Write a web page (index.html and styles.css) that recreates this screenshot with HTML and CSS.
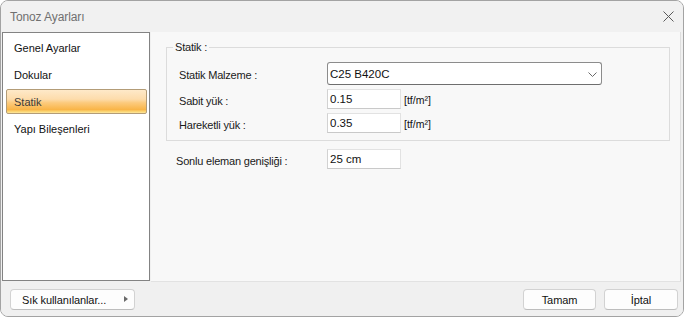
FILE: index.html
```html
<!DOCTYPE html>
<html lang="tr">
<head>
<meta charset="utf-8">
<title>Tonoz Ayarları</title>
<link rel="stylesheet" href="styles.css">
</head>
<body>
<div class="window">
  <div class="titlebar">
    <span class="title">Tonoz Ayarları</span>
    <svg class="close" width="11" height="11" viewBox="0 0 11 11"><path d="M0.5 0.5 L10.5 10.5 M10.5 0.5 L0.5 10.5" stroke="#5a5a5a" stroke-width="1" fill="none"/></svg>
  </div>
  <div class="main">
    <div class="list">
      <div class="item">Genel Ayarlar</div>
      <div class="item">Dokular</div>
      <div class="item selected">Statik</div>
      <div class="item">Yapı Bileşenleri</div>
    </div>
    <div class="panel">
      <fieldset class="group">
        <legend class="legend">Statik :</legend>
        <div class="grid">
          <span class="label">Statik Malzeme :</span>
          <div class="combo">
            <span>C25 B420C</span>
            <svg width="9" height="5" viewBox="0 0 9 5"><path d="M0.5 0.5 L4.5 4.5 L8.5 0.5" stroke="#6a6a6a" stroke-width="1" fill="none"/></svg>
          </div>
          <span class="label">Sabit yük :</span>
          <div class="field"><span class="input">0.15</span><span class="unit">[tf/m²]</span></div>
          <span class="label">Hareketli yük :</span>
          <div class="field"><span class="input">0.35</span><span class="unit">[tf/m²]</span></div>
        </div>
      </fieldset>
      <div class="row">
        <span class="label wide">Sonlu eleman genişliği :</span>
        <span class="input">25 cm</span>
      </div>
    </div>
  </div>
  <div class="footer">
    <button class="btn fav">Sık kullanılanlar...<span class="arrow"></span></button>
    <div class="actions">
      <button class="btn ok">Tamam</button>
      <button class="btn cancel">İptal</button>
    </div>
  </div>
</div>
</body>
</html>
```

FILE: styles.css
```css
* { box-sizing: border-box; }
html, body { margin: 0; padding: 0; background: #ffffff; }
body { font-family: "Liberation Sans", Arial, sans-serif; font-size: 11px; color: #1a1a1a; }

.window {
  width: 684px; height: 317px;
  border: 1px solid #a3a3a3;
  border-radius: 8px;
  overflow: hidden;
  background: #f0f0f0;
  display: flex; flex-direction: column;
}

.titlebar {
  height: 31px; flex: none;
  display: flex; align-items: center; justify-content: space-between;
  padding: 0 9px 0 9px;
  background: #f1f1f1;
}
.title { font-size: 12px; color: #707070; letter-spacing: -0.1px; }
.close { display: block; margin-top: 0; }

.main {
  height: 250px; flex: none;
  display: flex;
  padding-left: 1px;
  gap: 1px;
}

.list {
  width: 148px; height: 249px;
  border: 1px solid #838383;
  background: #ffffff;
  padding: 2px 2px 0 3px;
  display: flex; flex-direction: column; gap: 2px;
}
.item {
  height: 25px;
  display: flex; align-items: center;
  padding-left: 7px;
  font-size: 11px; color: #111;
  border: 1px solid transparent;
  border-radius: 2px;
}
.item.selected {
  border-color: #b39c77;
  color: #3b3b3b;
  background: linear-gradient(#fee9c9 0%, #fddcab 40%, #fccb7e 55%, #f9b548 85%, #fbd36f 93%, #fde79e 100%);
}

.panel {
  width: 530px; height: 250px;
  background: #f8f8f8;
  border-right: 1px solid #dedede;
  border-bottom: 1px solid #e2e2e2;
  padding: 7px 10px 0 15px;
}

.group {
  margin: 0;
  border: 1px solid #dcdcdc;
  padding: 7px 10px 7px 6px;
  min-width: 0;
}
.legend {
  padding: 0 2px;
  font-size: 11px; line-height: 16px; color: #1a1a1a;
  letter-spacing: -0.2px;
}

.grid {
  display: grid;
  grid-template-columns: 148px 1fr;
  row-gap: 4px;
  padding-left: 6px;
  align-items: center;
}
.label { padding-top: 3px; color: #1a1a1a; letter-spacing: -0.2px; }

.combo {
  width: 275px; height: 23px;
  background: #ffffff;
  border: 1px solid #8c8c8c;
  border-bottom-color: #6e6e6e;
  border-radius: 3px;
  display: flex; align-items: center; justify-content: space-between;
  padding: 0 4px 0 2px;
  font-size: 11.5px; color: #111;
}
.combo svg { display: block; margin-top: 1px; }

.field { display: flex; align-items: center; }
.input {
  width: 74px; height: 20px;
  background: #ffffff;
  border: 1px solid #e2e2e2;
  border-left-color: #d2d2d2;
  border-bottom-color: #c9c9c9;
  display: flex; align-items: center;
  padding-left: 2px;
  font-size: 11.5px; color: #111;
}
.unit { margin-left: 3px; font-size: 10.5px; color: #111; padding-top: 2px; }

.row {
  display: grid;
  grid-template-columns: 151px 1fr;
  align-items: center;
  margin-top: 8px;
  padding-left: 10px;
}

.footer {
  flex: 1;
  display: flex; align-items: flex-start; justify-content: space-between;
  padding: 7px 5px 0 9px;
  background: #f0f0f0;
}
.actions { display: flex; gap: 8px; }
.btn {
  height: 21px;
  font-family: "Liberation Sans", Arial, sans-serif;
  font-size: 11px; color: #111;
  background: #fdfdfd;
  border: 1px solid #d2d2d2;
  border-bottom-color: #bdbdbd;
  border-radius: 4px;
  padding: 0;
  display: flex; align-items: center; justify-content: center;
  letter-spacing: -0.1px;
}
.fav { width: 125px; justify-content: flex-start; padding-left: 11px; position: relative; }
.arrow {
  position: absolute; left: 113px; top: 6px;
  width: 0; height: 0;
  border-top: 3.5px solid transparent;
  border-bottom: 3.5px solid transparent;
  border-left: 4px solid #6a6a6a;
}
.ok { width: 73px; }
.cancel { width: 74px; }
```
